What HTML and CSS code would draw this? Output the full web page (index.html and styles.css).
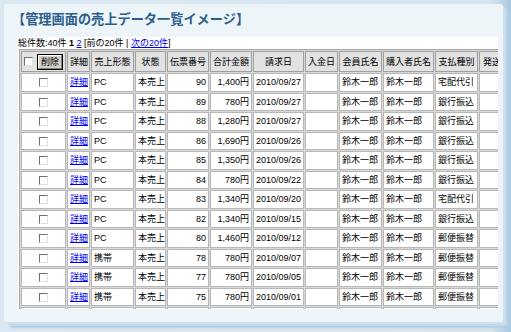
FILE: index.html
```html
<!DOCTYPE html>
<html lang="ja">
<head>
<meta charset="utf-8">
<title>管理画面の売上データ一覧イメージ</title>
<link rel="stylesheet" href="styles.css">
</head>
<body>
<div class="panel">
  <h1 class="title">【管理画面の売上データ一覧イメージ】</h1>
  <div class="content">
    <div class="info">総件数:40件 <b>1</b> <a href="#">2</a> [前の20件 | <a href="#">次の20件</a>]</div>
    <table class="list">
      <thead>
        <tr>
          <th class="c-chk"><span class="cb"></span><span class="btn">削除</span></th>
          <th class="c-det">詳細</th>
          <th class="c-form">売上形態</th>
          <th class="c-stat">状態</th>
          <th class="c-no">伝票番号</th>
          <th class="c-sum">合計金額</th>
          <th class="c-date">請求日</th>
          <th class="c-pay">入金日</th>
          <th class="c-mem">会員氏名</th>
          <th class="c-buy">購入者氏名</th>
          <th class="c-kind">支払種別</th>
          <th class="c-ship">発送</th>
        </tr>
      </thead>
      <tbody>
        <tr><td class="ctr"><span class="cb"></span></td><td><a href="#">詳細</a></td><td>PC</td><td>本売上</td><td class="num">90</td><td class="num">1,400円</td><td>2010/09/27</td><td></td><td>鈴木一郎</td><td>鈴木一郎</td><td>宅配代引</td><td></td></tr>
        <tr><td class="ctr"><span class="cb"></span></td><td><a href="#">詳細</a></td><td>PC</td><td>本売上</td><td class="num">89</td><td class="num">780円</td><td>2010/09/27</td><td></td><td>鈴木一郎</td><td>鈴木一郎</td><td>銀行振込</td><td></td></tr>
        <tr><td class="ctr"><span class="cb"></span></td><td><a href="#">詳細</a></td><td>PC</td><td>本売上</td><td class="num">88</td><td class="num">1,280円</td><td>2010/09/27</td><td></td><td>鈴木一郎</td><td>鈴木一郎</td><td>銀行振込</td><td></td></tr>
        <tr><td class="ctr"><span class="cb"></span></td><td><a href="#">詳細</a></td><td>PC</td><td>本売上</td><td class="num">86</td><td class="num">1,690円</td><td>2010/09/26</td><td></td><td>鈴木一郎</td><td>鈴木一郎</td><td>銀行振込</td><td></td></tr>
        <tr><td class="ctr"><span class="cb"></span></td><td><a href="#">詳細</a></td><td>PC</td><td>本売上</td><td class="num">85</td><td class="num">1,350円</td><td>2010/09/26</td><td></td><td>鈴木一郎</td><td>鈴木一郎</td><td>銀行振込</td><td></td></tr>
        <tr><td class="ctr"><span class="cb"></span></td><td><a href="#">詳細</a></td><td>PC</td><td>本売上</td><td class="num">84</td><td class="num">780円</td><td>2010/09/22</td><td></td><td>鈴木一郎</td><td>鈴木一郎</td><td>銀行振込</td><td></td></tr>
        <tr><td class="ctr"><span class="cb"></span></td><td><a href="#">詳細</a></td><td>PC</td><td>本売上</td><td class="num">83</td><td class="num">1,340円</td><td>2010/09/20</td><td></td><td>鈴木一郎</td><td>鈴木一郎</td><td>宅配代引</td><td></td></tr>
        <tr><td class="ctr"><span class="cb"></span></td><td><a href="#">詳細</a></td><td>PC</td><td>本売上</td><td class="num">82</td><td class="num">1,340円</td><td>2010/09/15</td><td></td><td>鈴木一郎</td><td>鈴木一郎</td><td>銀行振込</td><td></td></tr>
        <tr><td class="ctr"><span class="cb"></span></td><td><a href="#">詳細</a></td><td>PC</td><td>本売上</td><td class="num">80</td><td class="num">1,460円</td><td>2010/09/12</td><td></td><td>鈴木一郎</td><td>鈴木一郎</td><td>郵便振替</td><td></td></tr>
        <tr><td class="ctr"><span class="cb"></span></td><td><a href="#">詳細</a></td><td>携帯</td><td>本売上</td><td class="num">78</td><td class="num">780円</td><td>2010/09/07</td><td></td><td>鈴木一郎</td><td>鈴木一郎</td><td>郵便振替</td><td></td></tr>
        <tr><td class="ctr"><span class="cb"></span></td><td><a href="#">詳細</a></td><td>携帯</td><td>本売上</td><td class="num">77</td><td class="num">780円</td><td>2010/09/05</td><td></td><td>鈴木一郎</td><td>鈴木一郎</td><td>郵便振替</td><td></td></tr>
        <tr><td class="ctr"><span class="cb"></span></td><td><a href="#">詳細</a></td><td>携帯</td><td>本売上</td><td class="num">75</td><td class="num">780円</td><td>2010/09/01</td><td></td><td>鈴木一郎</td><td>鈴木一郎</td><td>郵便振替</td><td></td></tr>
        <tr><td class="ctr"></td><td></td><td></td><td></td><td></td><td></td><td></td><td></td><td></td><td></td><td></td><td></td></tr>
      </tbody>
    </table>
  </div>
</div>
</body>
</html>
```
FILE: styles.css
```css
html, body {
  margin: 0;
  padding: 0;
}
body {
  width: 511px;
  height: 332px;
  overflow: hidden;
  background: linear-gradient(to right, #dbe8f2 0%, #d6e5f0 96%, #a9c9e2 100%);
  font-family: "Liberation Sans", "Noto Sans CJK JP", sans-serif;
  color: #000;
}
.panel {
  margin: 4px 8px 0 4px;
  height: 318px;
  background: #eef5f9;
  border-radius: 3px;
  box-shadow: 2px 2px 0 #cfe1ee, 4px 4px 0 #c3d9ea, 6px 6px 2px #b5d0e5;
  display: flex;
  flex-direction: column;
}
.title {
  margin: 0;
  padding: 5px 0 0 8px;
  height: 28px;
  box-sizing: border-box;
  font-family: "Noto Sans CJK JP", sans-serif;
  font-size: 13.2px;
  line-height: 20px;
  font-weight: bold;
  color: #2c5e8c;
}
.content {
  margin: 5px 5px 0 14px;
  height: 272px;
  background: #fff;
  overflow: hidden;
}
.info {
  font-size: 9px;
  line-height: 11px;
  padding: 1px 0 0 0;
  height: 11px;
}
.info b { font-weight: bold; }
.info a, .list a {
  color: #0000ee;
  text-decoration: underline;
}
.list {
  margin-left: 1px;
  border-collapse: separate;
  border-spacing: 1px;
  background: #d8d8d8;
  border: 1px solid #a8a8a8;
  font-size: 9px;
  table-layout: fixed;
  width: 488px;
}
.list th, .list td {
  border: 1px solid #a0a0a0;
  padding: 0 2px;
  white-space: nowrap;
  overflow: hidden;
  height: 16.5px;
  line-height: 14px;
}
.list th {
  background: #e2e2e2;
  font-weight: normal;
  height: 19px;
  text-align: center;
}
.list td {
  background: #fff;
  border-color: #b8b8b8;
}
.list td.num { text-align: right; }
.list td.ctr { text-align: center; }
.c-chk { width: 39px; }
.c-det { width: 17px; }
.c-form { width: 37px; }
.c-stat { width: 25px; }
.c-no { width: 36px; }
.c-sum { width: 36px; }
.c-date { width: 45px; }
.c-pay { width: 27px; }
.c-mem { width: 37px; }
.c-buy { width: 45px; }
.c-kind { width: 37px; }
.c-ship { width: 20px; }
.cb {
  display: inline-block;
  width: 7px;
  height: 7px;
  border: 1px solid;
  border-color: #707070 #e0e0e0 #e0e0e0 #707070;
  background: #fff;
  vertical-align: middle;
}
.btn {
  display: inline-block;
  margin-left: 4px;
  padding: 0 3px;
  height: 14px;
  line-height: 14px;
  border: 1px solid #000;
  box-shadow: inset -1px -1px 0 #808080, inset 1px 1px 0 #fff;
  background: #d4d0c8;
  vertical-align: middle;
  font-size: 9px;
}
```
